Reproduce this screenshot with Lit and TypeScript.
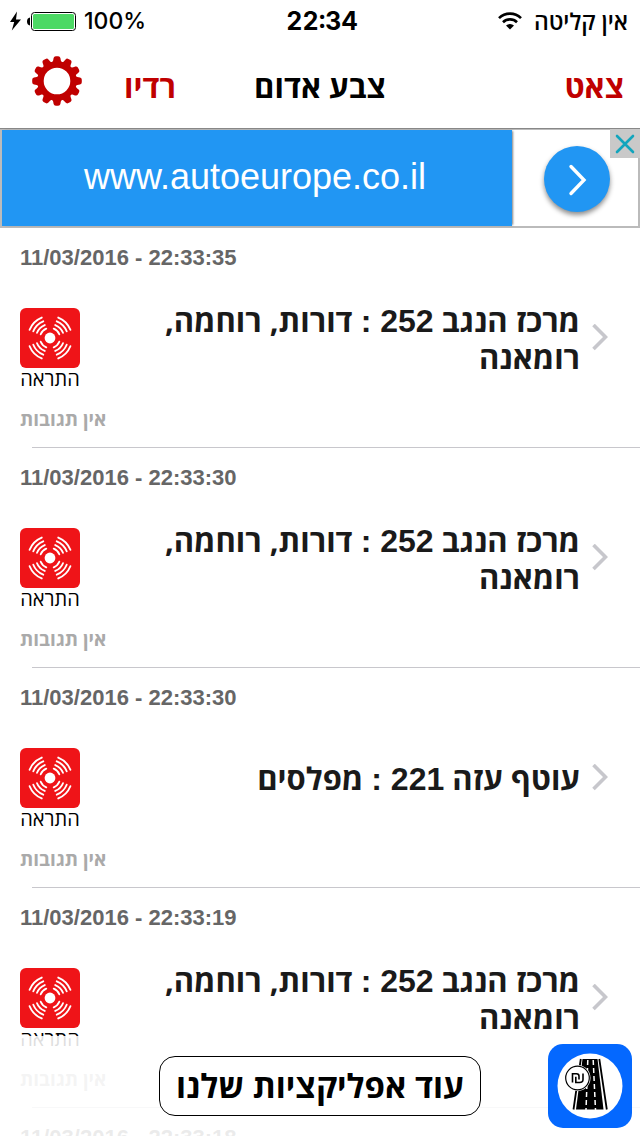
import { LitElement, html, css, svg } from "lit";
import { customElement, property } from "lit/decorators.js";

interface Alert {
  stamp: string;
  region: string;
  zone: string;
  towns: string;
}

const ALERTS: Alert[] = [
  { stamp: "11/03/2016 - 22:33:35", region: "מרכז הנגב", zone: "252", towns: "דורות, רוחמה, רומאנה" },
  { stamp: "11/03/2016 - 22:33:30", region: "מרכז הנגב", zone: "252", towns: "דורות, רוחמה, רומאנה" },
  { stamp: "11/03/2016 - 22:33:30", region: "עוטף עזה", zone: "221", towns: "מפלסים" },
  { stamp: "11/03/2016 - 22:33:19", region: "מרכז הנגב", zone: "252", towns: "דורות, רוחמה, רומאנה" },
  { stamp: "11/03/2016 - 22:33:18", region: "מרכז הנגב", zone: "252", towns: "דורות, רוחמה, רומאנה" },
];

const steps = (count: number) => Array.from({ length: count }, (_, i) => i);

const gearIcon = html`<svg width="50" height="50" viewBox="-25 -25 50 50" aria-hidden="true">
  <circle r="16.5" fill="none" stroke="#c00000" stroke-width="6.4" />
  ${steps(12).map(
    (i) => svg`<path transform="rotate(${i * 30})" fill="#c00000"
      d="M-5.2 -18C-3.8 -19.6 -3.8 -21 -3.4 -23Q-3 -24.8 -1.2 -24.8H1.2Q3 -24.8 3.4 -23C3.8 -21 3.8 -19.6 5.2 -18Z" />`
  )}
</svg>`;

const sirenIcon = html`<svg width="60" height="60" viewBox="-30 -30 60 60" aria-hidden="true">
  <rect x="-30" y="-30" width="60" height="60" rx="6" fill="#ef1418" />
  <circle r="5.4" fill="#fff" />
  ${[45, 135, 225, 315].map(
    (turn) => svg`<g transform="rotate(${turn})" fill="none" stroke="#fff" stroke-width="1.9" stroke-linecap="round">
      ${[10, 14, 18, 22].map((r) => {
        const a = (23 * Math.PI) / 180;
        const x = (r * Math.cos(a)).toFixed(2);
        const y = (r * Math.sin(a)).toFixed(2);
        return svg`<path d="M${x} -${y}A${r} ${r} 0 0 1 ${x} ${y}" />`;
      })}
    </g>`
  )}
</svg>`;

const roadIcon = html`<svg width="84" height="84" viewBox="0 0 84 84" aria-hidden="true">
  <rect width="84" height="84" rx="15" fill="#0468ff" />
  <circle cx="42" cy="42" r="32.5" fill="#fff" />
  <path d="M34.500 15H49.500L55.500 65.500H28Z" fill="#000" />
  <path d="M32.800 15L25.500 65.500M51.300 15L58.800 65.500" stroke="#000" stroke-width="1.800" />
  <path d="M39.800 16L38 66M45.200 16L47.500 66" stroke="#fff" stroke-width="1.500" stroke-dasharray="5 3" />
  <circle cx="29.500" cy="34" r="13" fill="#fff" />
  <circle cx="29.500" cy="34" r="11.800" fill="#fff" stroke="#000" stroke-width="1.200" />
  <path d="M24.500 38.500V29.800H28.500Q31 29.800 31 32.300V35.500M27.800 32.800V38.500H31.500Q35 38.500 35 35.500V29.500"
    fill="none" stroke="#000" stroke-width="1.600" />
</svg>`;

@customElement("status-bar")
export class StatusBar extends LitElement {
  static styles = css`
    :host {
      display: grid;
      grid-template-columns: 1fr auto 1fr;
      align-items: center;
      height: 42px;
      padding: 0 12px 0 8px;
      font: 500 23px/28px Inter, sans-serif;
    }
    .power,
    .signal {
      display: flex;
      align-items: center;
    }
    .power {
      gap: 7px;
    }
    .signal {
      justify-content: flex-end;
      gap: 12px;
    }
    .time {
      padding-left: 8px;
      font-size: 25px;
      font-weight: 700;
      font-variant-numeric: tabular-nums;
    }
    .carrier {
      font: 600 23px/28px "Open Sans", "Liberation Sans", sans-serif;
    }
  `;
  render() {
    return html`
      <div class="power">
        <svg width="69" height="20" viewBox="0 0 69 20" aria-hidden="true">
          <path d="M9 0.500L2 11H6.200L3.800 19.500L13 8.500H8Z" fill="#000" />
          <path d="M22 6.500Q19 7 19 10.500Q19 14 22 14.500Z" fill="#000" />
          <rect x="23.500" y="1.500" width="44" height="18" rx="3" fill="#fff" stroke="#000" />
          <rect x="25" y="3" width="41" height="15" rx="1.500" fill="#4cd964" />
        </svg>
        <span>100%</span>
      </div>
      <span class="time">22:34</span>
      <div class="signal">
        <svg width="24" height="18" viewBox="0 0 24 18" aria-hidden="true">
          <g fill="none" stroke="#000" stroke-width="2.600">
            <path d="M1 6.200A15.500 15.500 0 0 1 23 6.200" />
            <path d="M5 10.200A10 10 0 0 1 19 10.200" />
          </g>
          <path d="M12 17.500L8 13.500A5.800 5.800 0 0 1 16 13.500Z" />
        </svg>
        <span class="carrier" dir="rtl">אין קליטה</span>
      </div>
    `;
  }
}

@customElement("nav-bar")
export class NavBar extends LitElement {
  static styles = css`
    :host {
      display: grid;
      grid-template-columns: 1fr auto 1fr;
      align-items: center;
      height: 86px;
      padding: 2px 16px 0 32px;
      box-sizing: border-box;
      font: 700 31px/40px "Open Sans", "Liberation Sans", sans-serif;
    }
    .tools {
      display: flex;
      align-items: center;
      gap: 42px;
    }
    button {
      padding: 0;
      border: 0;
      background: none;
      color: #c00000;
      font: inherit;
    }
    .gear {
      display: flex;
      padding-bottom: 10px;
    }
    .chat {
      justify-self: end;
    }
    h1 {
      margin: 0;
      padding-right: 16px;
      font: inherit;
    }
  `;
  render() {
    return html`
      <div class="tools">
        <button class="gear" aria-label="הגדרות">${gearIcon}</button>
        <button>רדיו</button>
      </div>
      <h1 dir="rtl">צבע אדום</h1>
      <button class="chat">צאט</button>
    `;
  }
}

@customElement("ad-banner")
export class AdBanner extends LitElement {
  static styles = css`
    :host {
      display: block;
      position: relative;
      border-top: 1px solid #888;
    }
    .ad {
      display: flex;
      height: 99px;
      box-sizing: border-box;
      border: 2px solid #bbb;
      border-top-width: 1px;
      color: #fff;
      text-decoration: none;
    }
    .site {
      flex: 1;
      padding-right: 4px;
      background: #2196f3;
      box-shadow: 2px 0 2px -1px rgba(0, 0, 0, 0.5);
      font: 36px/94px "Liberation Sans", sans-serif;
      text-align: center;
    }
    .go {
      display: grid;
      place-items: center;
      width: 126px;
      padding: 2px 0 0 4px;
      box-sizing: border-box;
    }
    .disc {
      display: grid;
      place-items: center;
      width: 66px;
      height: 66px;
      border-radius: 50%;
      background: #2196f3;
      box-shadow: 0 3px 5px rgba(0, 0, 0, 0.45);
    }
    .close {
      display: grid;
      place-items: center;
      position: absolute;
      top: 0;
      right: 0;
      width: 30px;
      height: 29px;
      padding: 0;
      border: 0;
      background: #c9c9c9;
    }
  `;
  render() {
    return html`
      <a class="ad" href="#ad">
        <span class="site">www.autoeurope.co.il</span>
        <span class="go">
          <span class="disc">
            <svg width="66" height="66" viewBox="0 0 66 66" aria-hidden="true">
              <path d="M27 20.500L40 34L27 47.500" fill="none" stroke="#fff" stroke-width="3.400" stroke-linecap="round" />
            </svg>
          </span>
        </span>
      </a>
      <button class="close" aria-label="סגור">
        <svg width="20" height="20" viewBox="0 0 20 20" aria-hidden="true">
          <path d="M2 2L18 18M18 2L2 18" stroke="#12a5bd" stroke-width="2.600" stroke-linecap="round" />
        </svg>
      </button>
    `;
  }
}

@customElement("alert-row")
export class AlertRow extends LitElement {
  @property({ attribute: false }) alert!: Alert;

  static styles = css`
    :host {
      display: block;
    }
    .row {
      display: grid;
      grid-template-columns: 96px 1fr auto;
      grid-template-rows: 60px 100px auto;
      padding: 0 32px 0 20px;
      color: #1a1a1a;
      text-decoration: none;
    }
    .stamp {
      grid-column: 1 / -1;
      padding-top: 17px;
      color: #666;
      font: 700 22px/26px "Liberation Sans", sans-serif;
    }
    .kind {
      display: flex;
      flex-direction: column;
      align-items: center;
      width: 60px;
      padding-top: 20px;
      color: #000;
      font: 20px/22px "Open Sans", "Liberation Sans", sans-serif;
    }
    .kind svg {
      flex: none;
    }
    .title {
      align-self: center;
      margin: 0;
      padding-right: 12px;
      font: 700 31px/36px "Open Sans", "Liberation Sans", sans-serif;
    }
    .zone {
      font: 700 32px/36px "Liberation Sans", sans-serif;
    }
    .arrow {
      align-self: center;
    }
    .replies {
      grid-column: 1 / -1;
      padding: 20px 0 17px;
      color: #aaa;
      font: 700 19px/22px "Open Sans", "Liberation Sans", sans-serif;
    }
    .rule {
      height: 1px;
      margin-left: 32px;
      background: #c8c7cc;
    }
  `;
  render() {
    const { stamp, region, zone, towns } = this.alert;
    return html`
      <a class="row" href="#alert">
        <time class="stamp">${stamp}</time>
        <span class="kind">${sirenIcon}<span>התראה</span></span>
        <h2 class="title" dir="rtl">${region} <span class="zone">${zone} :</span> ${towns}</h2>
        <svg class="arrow" width="16" height="28" viewBox="0 0 16 28" aria-hidden="true">
          <path d="M1.500 1L13.500 13L1.500 25" fill="none" stroke="#c7c7cc" stroke-width="3.600" />
        </svg>
        <span class="replies">אין תגובות</span>
      </a>
      <div class="rule"></div>
    `;
  }
}

@customElement("app-root")
export class AppRoot extends LitElement {
  static styles = css`
    :host {
      display: flex;
      flex-direction: column;
      position: relative;
      height: 100vh;
      overflow: hidden;
      background: #fff;
      color: #000;
    }
    status-bar,
    nav-bar,
    ad-banner {
      flex: none;
    }
    .feed {
      flex: 1;
      min-height: 0;
      margin: 0;
      padding: 0;
      overflow: hidden;
      list-style: none;
    }
    .dock {
      display: grid;
      grid-template-columns: 1fr auto 1fr;
      align-items: center;
      position: absolute;
      inset: auto 0 0;
      height: 100px;
      padding: 0 8px;
      box-sizing: border-box;
      background: rgba(255, 255, 255, 0.87);
    }
    .more {
      grid-column: 2;
      height: 60px;
      padding: 0 16px;
      border: 1px solid #000;
      border-radius: 16px;
      background: #fff;
      color: #000;
      font: 700 33px/40px "Open Sans", "Liberation Sans", sans-serif;
    }
    .app {
      display: flex;
      justify-self: end;
    }
  `;
  render() {
    return html`
      <status-bar></status-bar>
      <nav-bar></nav-bar>
      <ad-banner></ad-banner>
      <ul class="feed">
        ${ALERTS.map((alert) => html`<li><alert-row .alert=${alert}></alert-row></li>`)}
      </ul>
      <div class="dock">
        <button class="more" dir="rtl">עוד אפליקציות שלנו</button>
        <a class="app" href="#app" aria-label="כביש">${roadIcon}</a>
      </div>
    `;
  }
}
